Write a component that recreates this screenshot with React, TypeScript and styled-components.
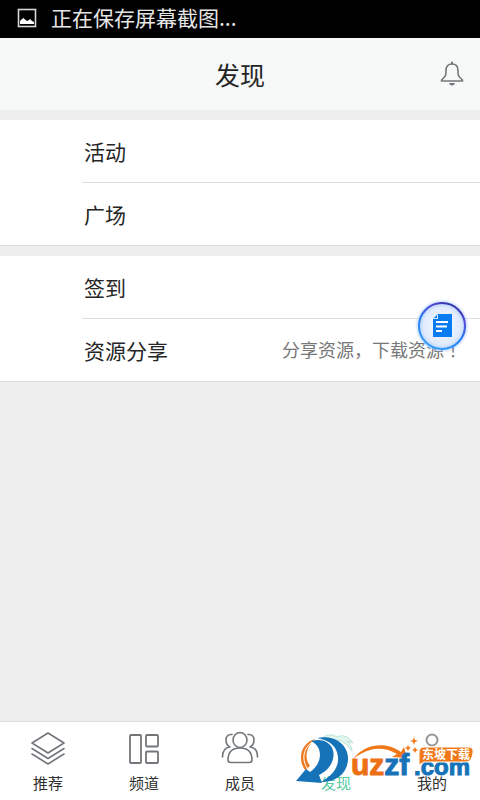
import React from "react";
import styled, { createGlobalStyle } from "styled-components";

const GlobalStyle = createGlobalStyle`
  * { box-sizing: border-box; }
  html, body { margin: 0; height: 100%; }
  #root { height: 100%; }
  body {
    background: #eeeeee;
    color: #252525;
    font-family: "Noto Sans CJK SC", sans-serif;
  }
  button { font: inherit; color: inherit; border: 0; background: none; padding: 0; cursor: pointer; }
`;

const Page = styled.div`
  min-height: 100%;
  display: flex;
  flex-direction: column;
`;

const StatusBar = styled.div`
  display: flex;
  align-items: center;
  gap: 14px;
  height: 38px;
  padding: 0 17px 2px;
  background: #000;
  color: #e6e6e6;
  font-size: 21px;
  line-height: 34px;

  span { padding-bottom: 2px; }
`;

const Header = styled.header`
  display: grid;
  grid-template-columns: 56px 1fr 56px;
  align-items: center;
  height: 72px;
  background: #f7f9f9;
`;

const Title = styled.h1`
  grid-column: 2;
  margin: 0;
  text-align: center;
  font-size: 25px;
  font-weight: 400;
  line-height: 36px;
`;

const IconButton = styled.button`
  display: grid;
  place-items: center;
  height: 48px;
`;

const Main = styled.main`
  flex: 1;
  display: flex;
  flex-direction: column;
  gap: 10px;
  padding-top: 10px;
`;

const Group = styled.section`
  position: relative;
  background: #fff;
  border-bottom: 1px solid #dedede;
`;

const Row = styled.button<{ $divided?: boolean }>`
  display: flex;
  align-items: center;
  justify-content: space-between;
  width: calc(100% - 82px);
  height: ${(p) => (p.$divided ? 63 : 62)}px;
  margin-left: 82px;
  padding: 0 18px 0 2px;
  border-bottom: ${(p) => (p.$divided ? "1px solid #dddddd" : "0")};
  text-align: left;
  font-size: 21px;
  line-height: 30px;
`;

const Hint = styled.span`
  color: #777;
  font-size: 18px;
  line-height: 24px;
  padding-bottom: 2px;
`;

const CenteredMark = styled.span`
  font-family: "Noto Sans CJK TC", sans-serif;
`;

const FloatingButton = styled.button`
  position: absolute;
  right: 10px;
  top: 42px;
  display: grid;
  width: 56px;
  height: 56px;
`;

const TabBar = styled.nav`
  position: relative;
  display: grid;
  grid-template-columns: repeat(5, 1fr);
  height: 79px;
  border-top: 1px solid #dcdcdc;
  background: #fff;
`;

const Tab = styled.button<{ $active?: boolean }>`
  display: flex;
  flex-direction: column;
  align-items: center;
  gap: 2px;
  padding-top: 7px;
  color: ${(p) => (p.$active ? "#55c9a0" : "#303030")};
  font-size: 15px;
  line-height: 24px;
`;

const Watermark = styled.svg`
  position: absolute;
  right: 0;
  top: 8px;
  pointer-events: none;
`;

const line = {
  fill: "none",
  stroke: "#73777b",
  strokeWidth: 1.6,
  strokeLinejoin: "round",
  strokeLinecap: "round",
} as const;

const PictureIcon = () => (
  <svg width="20" height="20" viewBox="0 0 20 20" aria-hidden="true">
    <rect x="1.5" y="1.5" width="17" height="17" fill="none" stroke="#d8d8d8" strokeWidth="1.6" />
    <path d="M3 16V13L5 11L6.5 10L8 11.5L10 13L12 12L13 11L15 13L17 14V16Z" fill="#fff" />
  </svg>
);

const BellIcon = () => (
  <svg width="26" height="26" viewBox="0 0 26 26" aria-hidden="true">
    <g {...line}>
      <path d="M2.5 19C5 17 7 15.500 7 12V9.5C7 5.500 9 3 13 3S19 5.500 19 9.500V12C19 15.500 21 17 23.500 19V20H2.500Z" />
      <path d="M13 1.700V2.500" strokeWidth="2.200" />
    </g>
    <path d="M10 22H16Q15.500 24.500 13 24.500T10 22Z" fill="#777b7e" />
  </svg>
);

const LayersIcon = () => (
  <svg width="40" height="40" viewBox="0 0 40 40" aria-hidden="true" {...line}>
    <path d="M20 4L36 14L20 24L4 14Z" />
    <path d="M4 19.500L20 29.500L36 19.500M4 25L20 35L36 25" />
  </svg>
);

const GridIcon = () => (
  <svg width="40" height="40" viewBox="0 0 40 40" aria-hidden="true" {...line} strokeWidth="1.800">
    <rect x="6" y="6" width="11" height="28" rx="1" />
    <rect x="22" y="6" width="12" height="11.500" rx="1" />
    <rect x="22" y="22.500" width="12" height="11.500" rx="1" />
  </svg>
);

const MembersIcon = () => (
  <svg width="40" height="40" viewBox="0 0 40 40" aria-hidden="true" {...line}>
    <ellipse cx="20" cy="11" rx="7" ry="7.500" />
    <path d="M8 31C8 23.500 12 19 20 19S32 23.500 32 31Q32 33.500 29 33.500H11Q8 33.500 8 31Z" />
    <path d="M12 5.500C7.500 5 6 8 6 11C6 15 8 17 10 18C5 18.500 2.500 22 2.500 28" />
    <path d="M28 5.500C32.500 5 34 8 34 11C34 15 32 17 30 18C35 18.500 37.500 22 37.500 28" />
  </svg>
);

const DiscoverIcon = () => (
  <svg width="40" height="40" viewBox="0 0 40 40" aria-hidden="true">
    <path
      d="M5 10C10 5 16 5 21 8C27 5 33 8 37 14L31 12C34 15 36 18 36 22C31 15 26 11 20 11Z"
      fill="#e2f6ef"
      stroke="#b9e4d6"
      strokeWidth="1"
    />
  </svg>
);

const ProfileIcon = () => (
  <svg width="40" height="40" viewBox="0 0 40 40" aria-hidden="true" {...line} stroke="#969696">
    <circle cx="20" cy="11" r="5.500" strokeWidth="2" />
  </svg>
);

const NoteIcon = () => (
  <svg width="56" height="56" viewBox="0 0 56 56" aria-hidden="true">
    <defs>
      <linearGradient id="ring" x1="0.200" y1="1" x2="0.700" y2="0">
        <stop offset="0" stopColor="#36a5ff" />
        <stop offset="0.500" stopColor="#2878ec" />
        <stop offset="0.800" stopColor="#5444d6" />
        <stop offset="1" stopColor="#3434a8" />
      </linearGradient>
      <radialGradient id="disc">
        <stop offset="0.350" stopColor="#eef4ff" />
        <stop offset="0.800" stopColor="#e1ebfd" />
        <stop offset="1" stopColor="#b8d5fb" />
      </radialGradient>
      <radialGradient id="halo">
        <stop offset="0.840" stopColor="#86b6ff" stopOpacity="0.600" />
        <stop offset="1" stopColor="#86b6ff" stopOpacity="0" />
      </radialGradient>
    </defs>
    <circle cx="28" cy="28" r="27" fill="url(#halo)" />
    <circle cx="28" cy="28" r="23" fill="url(#disc)" stroke="url(#ring)" strokeWidth="2" />
    <path d="M24 16H38V39H19V21Z" fill="#087cf0" />
    <path d="M19 21L24 16V21Z" fill="#d9eaff" />
    <path d="M20 20L23 17V20Z" fill="#087cf0" />
    <path d="M22 24H34M22 28.500H33M22 33H28" stroke="#fff" strokeWidth="1.800" />
  </svg>
);

const SiteMark = () => (
  <Watermark width="190" height="64" viewBox="0 0 190 64" role="img" aria-label="uzzf.com 东坡下载">
    <path d="M25 9C11 13 7 29 15 40L20 36C14 28 16 17 25 9Z" fill="#ee7921" />
    <path d="M22 12C14 18 11 28 17 38" fill="none" stroke="#fff" strokeWidth="1" />
    <path d="M27 8C47 4 59 17 58 30C57 44 46 52 31 52C43 45 49 37 48 27C47 17 40 10 27 8Z" fill="#1673b8" />
    <path d="M21 11C37 7 46 17 43 29C41 37 35 42 29 45L32 53L6 51L16 39L20 42C31 35 35 18 21 11Z" fill="#1673b8" />
    <path d="M63 29C76 12 98 12 111 22L114 17L117 28L102 27L107 24C93 16 79 17 63 29Z" fill="#f07818" />
    <text
      x="61"
      y="45"
      fontFamily="Liberation Sans, sans-serif"
      fontWeight="700"
      fontSize="30"
      strokeWidth="1"
    >
      <tspan fill="#ed7015" stroke="#ed7015">uz</tspan><tspan fill="#1673b8" stroke="#1673b8">zf</tspan>
    </text>
    <text
      x="124"
      y="45"
      fontFamily="Liberation Sans, sans-serif"
      fontWeight="700"
      fontSize="24"
      fill="#1673b8"
      stroke="#1673b8"
      strokeWidth="1"
    >
      .com
    </text>
    <path d="M134 17H178Q184 17 183 23L182 27Q181 32 175 32H134L129 35V23Q129 17 134 17Z" fill="#f07818" stroke="#fff" strokeWidth="1" />
    <text x="132" y="29" fontSize="12" fontWeight="700" fill="#fff">东坡下载</text>
    <path d="M124 7L125 10L128 11L125 12L124 15L123 12L120 11L123 10ZM118 15L119 17L121 18L119 19L118 21L117 19L115 18L117 17ZM125 17L126 19L128 20L126 21L125 23L124 21L122 20L124 19Z" fill="#f07818" />
  </Watermark>
);

const tabs = [
  { label: "推荐", Icon: LayersIcon },
  { label: "频道", Icon: GridIcon },
  { label: "成员", Icon: MembersIcon },
  { label: "发现", Icon: DiscoverIcon },
  { label: "我的", Icon: ProfileIcon },
];

export default function App() {
  return (
    <Page>
      <GlobalStyle />
      <StatusBar>
        <PictureIcon />
        <span>正在保存屏幕截图...</span>
      </StatusBar>
      <Header>
        <Title>发现</Title>
        <IconButton aria-label="通知"><BellIcon /></IconButton>
      </Header>
      <Main>
        <Group>
          <Row $divided>活动</Row>
          <Row>广场</Row>
        </Group>
        <Group>
          <Row $divided>签到</Row>
          <Row>
            <span>资源分享</span>
            <Hint>分享资源，下载资源<CenteredMark>！</CenteredMark></Hint>
          </Row>
          <FloatingButton aria-label="笔记"><NoteIcon /></FloatingButton>
        </Group>
      </Main>
      <TabBar>
        {tabs.map(({ label, Icon }) => (
          <Tab key={label} $active={label === "发现"} aria-current={label === "发现" ? "page" : undefined}>
            <Icon />
            <span>{label}</span>
          </Tab>
        ))}
        <SiteMark />
      </TabBar>
    </Page>
  );
}
